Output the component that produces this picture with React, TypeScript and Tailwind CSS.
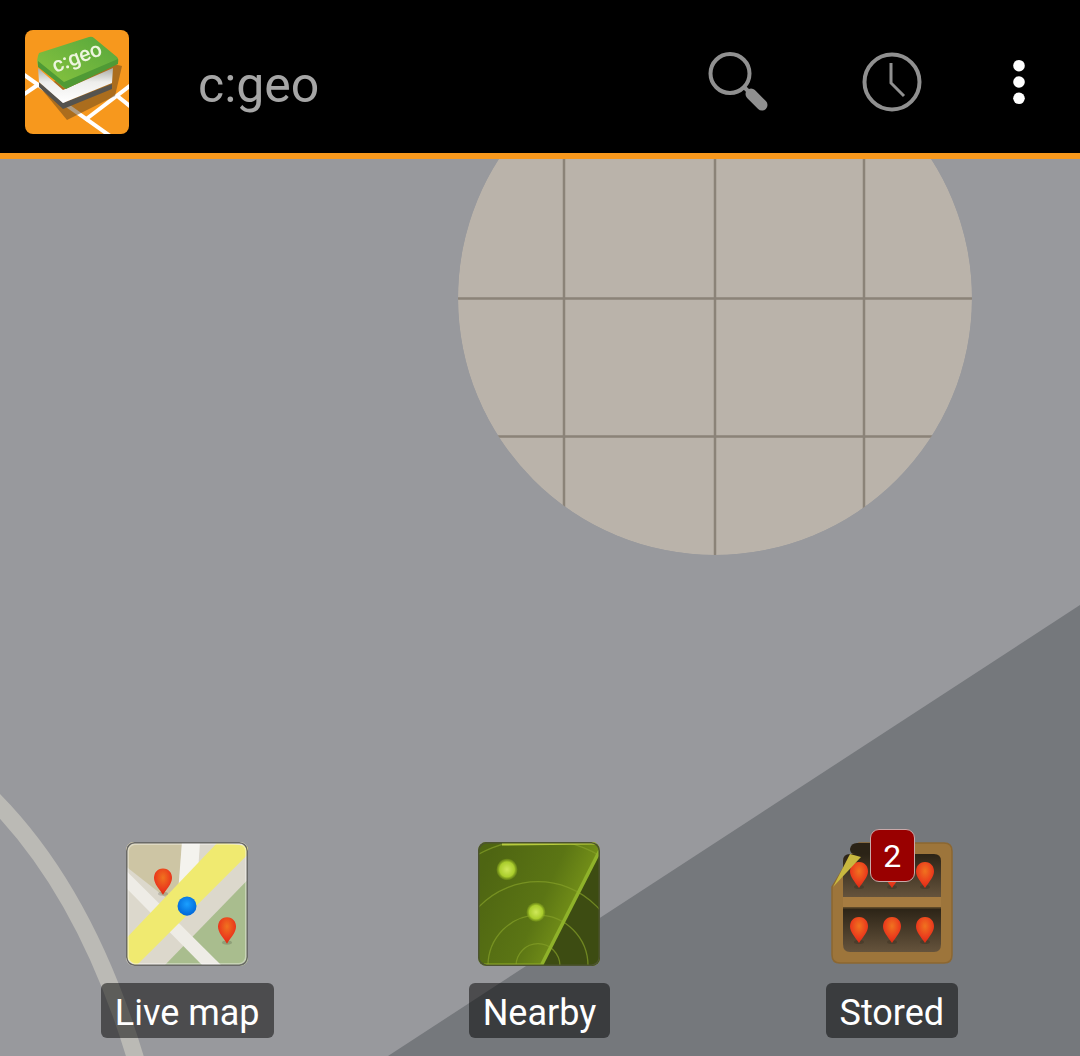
const gridX = [564, 715, 864];
const gridY = [298.5, 436.5];

function MapBackdrop() {
  // coordinates are page coordinates, the viewBox starts below the 159px header
  return (
    <svg className="absolute inset-0 w-full h-full" viewBox="0 159 1080 897" preserveAspectRatio="none">
      <defs>
        <clipPath id="block">
          <circle cx="715" cy="298" r="257" />
        </clipPath>
      </defs>
      <polygon points="1080,605 1080,1056 388,1056" fill="#75787c" />
      <path d="M-8 798 Q 86 892 136 1060" fill="none" stroke="#bbbab5" strokeWidth="17" />
      <g clipPath="url(#block)">
        <circle cx="715" cy="298" r="257" fill="#bab3aa" />
        {gridX.map((x) => (
          <rect key={x} x={x - 1.25} y="150" width="2.5" height="420" fill="#8b8378" />
        ))}
        {gridY.map((y) => (
          <rect key={y} x="450" y={y - 1.25} width="530" height="2.5" fill="#8b8378" />
        ))}
      </g>
    </svg>
  );
}

function Logo() {
  return (
    <svg width="104" height="104" viewBox="0 0 104 104" className="shrink-0 blur-[0.4px]">
      <defs>
        <clipPath id="logoClip">
          <rect width="104" height="104" rx="8" />
        </clipPath>
        <linearGradient id="lid" x1="0" y1="1" x2="1" y2="0">
          <stop offset="0" stopColor="#8cc63f" />
          <stop offset="1" stopColor="#55a63c" />
        </linearGradient>
        <linearGradient id="side" x1="0" y1="0" x2="0" y2="1">
          <stop offset="0" stopColor="#a9aca6" />
          <stop offset="0.4" stopColor="#eeeeec" />
          <stop offset="1" stopColor="#ffffff" />
        </linearGradient>
      </defs>
      <g clipPath="url(#logoClip)">
        <rect width="104" height="104" fill="#f7981d" />
        <g stroke="#ffffff" strokeWidth="4" fill="none">
          <path d="M-2 44 L88 108" />
          <path d="M-2 65 L14 54" />
          <path d="M60 90 L106 55" />
          <path d="M91 65 L106 77" />
        </g>
        <polygon points="14,56 42,90 90,66 97,36 88,34" fill="#6e4a1e" fillOpacity="0.55" />
        <path d="M14 52 L38 73 L87 54 L87 59 L38 79 L14 57 Z" fill="#55534e" />
        <polygon points="14,52 38,73 87,53 88,38 38,60 13,38" fill="url(#side)" />
        <path
          d="M14 23 L64 7 Q67 6 69 8 L92 27 Q94 29 93 33 L42 58 Q40 59 38 57 L13 36 Q11 30 14 23 Z"
          fill="url(#lid)"
        />
        <path d="M13 31 L39 52 L93 29 L93 34 L41 59 L13 37 Z" fill="#4f9a35" />
        <text
          x="53"
          y="34"
          textAnchor="middle"
          fill="#eef5df"
          fontSize="21"
          fontWeight="500"
          fontFamily="Roboto, sans-serif"
          transform="rotate(-21 53 30)"
        >
          c:geo
        </text>
      </g>
    </svg>
  );
}

function SearchIcon() {
  return (
    <svg width="68" height="68" viewBox="0 0 68 68" fill="none" className="shrink-0">
      <circle cx="25" cy="25.5" r="19.5" stroke="#909090" strokeWidth="4" />
      <path d="M39 39 L46 46" stroke="#909090" strokeWidth="4" />
      <path d="M46 46 L57 57" stroke="#909090" strokeWidth="11" strokeLinecap="round" />
    </svg>
  );
}

function ClockIcon() {
  return (
    <svg width="64" height="64" viewBox="0 0 64 64" fill="none" className="shrink-0">
      <circle cx="32" cy="32" r="27.5" stroke="#909090" strokeWidth="4" />
      <path d="M31 13 L31 33 L44 46" stroke="#909090" strokeWidth="3" />
    </svg>
  );
}

function MoreIcon() {
  return (
    <svg width="16" height="48" viewBox="0 0 16 48" className="shrink-0">
      <circle cx="8" cy="7.7" r="5.8" fill="#ffffff" />
      <circle cx="8" cy="24" r="5.8" fill="#ffffff" />
      <circle cx="8" cy="40.3" r="5.8" fill="#ffffff" />
    </svg>
  );
}

function Pin({ x, y, id }: { x: number; y: number; id: string }) {
  // x is the pin's centre, y its top; the pin is 18 wide and 26 tall
  return (
    <g transform={`translate(${x - 9} ${y})`}>
      <ellipse cx="9" cy="25" rx="5" ry="2" fill="#000000" fillOpacity="0.15" />
      <path d="M9 0 C15 0 18 4.5 18 9.5 C18 15 13 20 9 26 C5 20 0 15 0 9.5 C0 4.5 3 0 9 0 Z" fill={`url(#${id})`} />
    </g>
  );
}

function PinGradient({ id }: { id: string }) {
  return (
    <radialGradient id={id} cx="0.5" cy="0.35" r="0.7">
      <stop offset="0" stopColor="#f0731f" />
      <stop offset="0.65" stopColor="#ea3a1c" />
      <stop offset="1" stopColor="#d8260f" />
    </radialGradient>
  );
}

function LiveMapIcon() {
  return (
    <svg width="122" height="124" viewBox="0 0 122 122" preserveAspectRatio="none" className="blur-[0.5px]">
      <defs>
        <clipPath id="mapClip">
          <rect width="122" height="122" rx="8" />
        </clipPath>
        <PinGradient id="mapPin" />
        <radialGradient id="mapDot" cx="0.5" cy="0.4" r="0.6">
          <stop offset="0" stopColor="#1aa0ff" />
          <stop offset="1" stopColor="#0066d8" />
        </radialGradient>
      </defs>
      <g clipPath="url(#mapClip)">
        <rect width="122" height="122" fill="#dcd8cc" />
        <polygon points="0,0 56,0 53,45 44,58 0,24" fill="#cdc5a4" />
        <polygon points="122,37 122,122 38,122" fill="#a9bd8e" />
        <polygon points="56,0 74,0 72,30 52,50" fill="#f4f3ee" />
        <polygon points="0,28 96,122 77,122 0,45" fill="#eeece6" />
        <polygon points="92,0 122,4 122,12 10,122 0,114 0,95" fill="#f0ea70" />
        <Pin x={37} y={26} id="mapPin" />
        <Pin x={101} y={74} id="mapPin" />
        <circle cx="61" cy="63" r="9.5" fill="url(#mapDot)" />
        <rect x="2" y="2" width="118" height="118" rx="7" fill="none" stroke="#ffffff" strokeOpacity="0.35" strokeWidth="2" />
        <rect x="0.75" y="0.75" width="120.5" height="120.5" rx="8" fill="none" stroke="#6a6a68" strokeWidth="1.5" />
      </g>
    </svg>
  );
}

function RadarIcon() {
  const arcs = [22, 50, 83, 125];
  return (
    <svg width="122" height="124" viewBox="0 0 122 122" preserveAspectRatio="none" className="blur-[0.5px]">
      <defs>
        <clipPath id="radarClip">
          <rect width="122" height="122" rx="8" />
        </clipPath>
        <linearGradient id="sweep" x1="0" y1="0.3" x2="1" y2="0.75">
          <stop offset="0" stopColor="#4e6512" />
          <stop offset="0.5" stopColor="#5b7514" />
          <stop offset="0.85" stopColor="#7d9a1a" />
        </linearGradient>
        <radialGradient id="blip">
          <stop offset="0" stopColor="#d0e85a" />
          <stop offset="0.7" stopColor="#aacd2c" />
          <stop offset="1" stopColor="#7d9c18" stopOpacity="0.4" />
        </radialGradient>
      </defs>
      <g clipPath="url(#radarClip)">
        <rect width="122" height="122" fill="url(#sweep)" />
        <polygon points="122,8 122,122 63,122" fill="#3d4c12" />
        <g fill="none" stroke="#85a028" strokeOpacity="0.7" strokeWidth="1.3">
          {arcs.map((r) => (
            <circle key={r} cx="60" cy="122" r={r} />
          ))}
        </g>
        <path d="M122 8 L63 122" stroke="#8fb22a" strokeWidth="3.5" />
        <path d="M24 2 L118 1" stroke="#b7cc3e" strokeWidth="3" />
        <path d="M6 120.5 L62 120.5" stroke="#90ad26" strokeWidth="2" />
        <circle cx="29" cy="27" r="10.5" fill="url(#blip)" />
        <circle cx="58" cy="69" r="9.5" fill="url(#blip)" />
        <rect x="0.75" y="0.75" width="120.5" height="120.5" rx="8" fill="none" stroke="#4c5330" strokeWidth="1.5" />
      </g>
    </svg>
  );
}

function StoredIcon() {
  const cols = [28, 61, 94];
  return (
    <svg width="122" height="122" viewBox="0 0 122 122" preserveAspectRatio="none" className="blur-[0.5px]">
      <defs>
        <PinGradient id="shelfPin" />
        <linearGradient id="shelfBack" x1="0" y1="0" x2="0" y2="1">
          <stop offset="0" stopColor="#2b2316" />
          <stop offset="1" stopColor="#65533c" />
        </linearGradient>
      </defs>
      <path d="M28 1 H113 Q121 1 121 9 V113 Q121 121 113 121 H9 Q1 121 1 113 V45 Z" fill="#9d753b" stroke="#8c6731" strokeWidth="1.5" />
      <path d="M12 19 Q12 12 19 12 H103 Q110 12 110 19 V55 H12 Z" fill="url(#shelfBack)" />
      <path d="M12 66 H110 V102 Q110 110 103 110 H19 Q12 110 12 102 Z" fill="url(#shelfBack)" />
      <rect x="12" y="55" width="98" height="11" fill="#a67c41" />
      <rect x="12" y="65" width="98" height="1.5" fill="#5e4a2a" />
      {cols.map((x) => (
        <Pin key={x} x={x} y={20} id="shelfPin" />
      ))}
      {cols.map((x) => (
        <Pin key={x} x={x} y={75} id="shelfPin" />
      ))}
      <path d="M26 1 H42 V12 H24 Q19 12 19 7 Q20 1 26 1 Z" fill="#2b2316" />
      <polygon points="2,45 30,15 19,12" fill="#c9b83f" />
    </svg>
  );
}

const tiles = [
  { label: "Live map", icon: <LiveMapIcon /> },
  { label: "Nearby", icon: <RadarIcon /> },
  { label: "Stored", icon: <StoredIcon />, badge: "2" },
];

export default function App() {
  return (
    <div className="flex flex-col h-[1056px] w-[1080px] overflow-hidden bg-[#98999d] font-['Roboto',sans-serif]">
      {/* Action bar */}
      <header className="h-[159px] shrink-0 flex items-center bg-black border-b-[6px] border-[#f7981d] pt-[11px] pl-[25px] pr-[53px]">
        <Logo />
        <span className="ml-[69px] text-[50px] leading-none mt-[5px] text-[#a6a6a6]">c:geo</span>
        <div className="ml-auto flex items-center gap-[87px]">
          <SearchIcon />
          <ClockIcon />
          <MoreIcon />
        </div>
      </header>

      <main className="relative flex-1 flex flex-col justify-end">
        <MapBackdrop />
        <div className="relative grid grid-cols-3 pl-[11px] pr-[12px] pb-[18px]">
          {tiles.map((t) => (
            <div key={t.label} className="flex flex-col items-center">
              <div className="relative h-[124px]">
                {t.icon}
                {t.badge && (
                  <span className="absolute left-[39px] -top-[13px] w-[45px] h-[53px] flex items-center justify-center rounded-[9px] border border-[#c9a9a9] bg-[#990000] text-white text-[32px]">
                    {t.badge}
                  </span>
                )}
              </div>
              <span className="mt-[17px] h-[55px] flex items-center pt-[5px] px-[14px] rounded-[6px] bg-black/50 text-white text-[36px] whitespace-nowrap">
                {t.label}
              </span>
            </div>
          ))}
        </div>
      </main>
    </div>
  );
}
